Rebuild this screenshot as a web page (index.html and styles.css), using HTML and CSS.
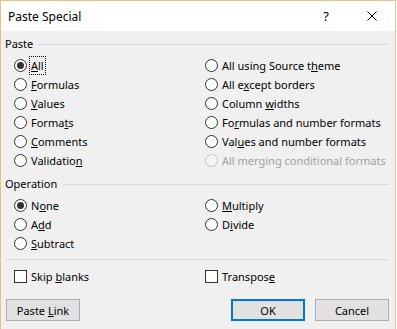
FILE: index.html
```html
<!DOCTYPE html>
<html lang="en">
<head>
  <meta charset="UTF-8" />
  <title>Paste Special</title>
  <link rel="stylesheet" href="styles.css">
</head>
<body>

  <div class="window">

    <div class="titlebar">
      <span class="title">Paste Special</span>
      <span class="title-btn">?</span>
      <span class="title-btn">
        <svg width="10" height="10" viewBox="0 0 10 10">
          <path d="M0.5 0.5 L9.5 9.5 M9.5 0.5 L0.5 9.5" stroke="#000" stroke-width="1" fill="none" />
        </svg>
      </span>
    </div>

    <div class="content">

      <div class="group-head">
        <span>Paste</span>
        <span class="group-line"></span>
      </div>
      <div class="options">
        <label class="opt"><span class="radio checked"></span><span class="focus"><u>A</u>ll</span></label>
        <label class="opt right"><span class="radio"></span><span>All using Source t<u>h</u>eme</span></label>
        <label class="opt"><span class="radio"></span><span><u>F</u>ormulas</span></label>
        <label class="opt right"><span class="radio"></span><span>All e<u>x</u>cept borders</span></label>
        <label class="opt"><span class="radio"></span><span><u>V</u>alues</span></label>
        <label class="opt right"><span class="radio"></span><span>Column <u>w</u>idths</span></label>
        <label class="opt"><span class="radio"></span><span>Forma<u>t</u>s</span></label>
        <label class="opt right"><span class="radio"></span><span>Fo<u>r</u>mulas and number formats</span></label>
        <label class="opt"><span class="radio"></span><span><u>C</u>omments</span></label>
        <label class="opt right"><span class="radio"></span><span>Val<u>u</u>es and number formats</span></label>
        <label class="opt"><span class="radio"></span><span>Validatio<u>n</u></span></label>
        <label class="opt right disabled"><span class="radio"></span><span>All merging conditional formats</span></label>
      </div>

      <div class="group-head op-head">
        <span>Operation</span>
        <span class="group-line"></span>
      </div>
      <div class="options">
        <label class="opt"><span class="radio checked"></span><span>N<u>o</u>ne</span></label>
        <label class="opt right"><span class="radio"></span><span><u>M</u>ultiply</span></label>
        <label class="opt"><span class="radio"></span><span>A<u>d</u>d</span></label>
        <label class="opt right"><span class="radio"></span><span>D<u>i</u>vide</span></label>
        <label class="opt"><span class="radio"></span><span><u>S</u>ubtract</span></label>
      </div>

      <div class="separator"></div>

      <div class="options checks">
        <label class="opt"><span class="check"></span><span>Skip <u>b</u>lanks</span></label>
        <label class="opt right"><span class="check"></span><span>Transpos<u>e</u></span></label>
      </div>

      <div class="footer">
        <button class="btn">Paste <u>L</u>ink</button>
        <button class="btn btn-default">OK</button>
        <button class="btn">Cancel</button>
      </div>

    </div>
  </div>

</body>
</html>
```

FILE: styles.css
```css
body {
  margin: 0;
  font-family: "Noto Sans", "Open Sans", sans-serif;
  font-size: 11px;
  color: #000;
  background: #fff;
}

.window {
  width: 396px;
  height: 329px;
  box-sizing: border-box;
  border: 1px solid #e6c18a;
  border-bottom: none;
  background: #f0f0f0;
  overflow: hidden;
}

.titlebar {
  height: 30px;
  background: #fff;
  display: flex;
  align-items: center;
}

.title {
  flex: 1;
  padding-left: 7px;
  font-size: 12px;
}

.title-btn {
  width: 46px;
  height: 30px;
  display: flex;
  align-items: center;
  justify-content: center;
  font-size: 13px;
}

.content {
  padding: 0 6px 0 4px;
}

.group-head {
  display: flex;
  align-items: center;
  height: 14px;
  line-height: 14px;
  margin-top: 6px;
}

.op-head {
  margin-top: 7px;
}

.group-line {
  flex: 1;
  height: 1px;
  background: #dcdcdc;
  margin-left: 5px;
}

.options {
  display: grid;
  grid-template-columns: 191px 1fr;
  padding-left: 9px;
  margin-top: 5px;
}

.opt {
  display: flex;
  align-items: center;
  height: 19px;
  white-space: nowrap;
}

.radio, .check {
  width: 13px;
  height: 13px;
  box-sizing: border-box;
  border: 1px solid #333;
  background: #fff;
  margin-right: 4px;
  flex-shrink: 0;
  position: relative;
}

.radio {
  border-radius: 50%;
}

.radio.checked::after {
  content: "";
  position: absolute;
  left: 2px;
  top: 2px;
  width: 7px;
  height: 7px;
  border-radius: 50%;
  background: #333;
}

.disabled {
  color: #a0a0a0;
}

.disabled .radio {
  border-color: #c4c4c4;
  background: #f5f5f5;
}

.focus {
  outline: 1px dotted #000;
  outline-offset: 1px;
}

.separator {
  height: 1px;
  background: #dcdcdc;
  margin-top: 6px;
}

.checks {
  margin-top: 7px;
}

.footer {
  display: flex;
  margin-top: 13px;
  padding-left: 1px;
}

.btn {
  width: 74px;
  height: 22px;
  box-sizing: border-box;
  border: 1px solid #adadad;
  background: #e1e1e1;
  font-family: inherit;
  font-size: 11px;
  color: #000;
  padding: 0;
}

.btn-default {
  margin-left: auto;
  border-color: #0078d7;
  box-shadow: inset 0 0 0 1px #0078d7;
}

.btn + .btn-default + .btn {
  margin-left: 10px;
}
```
